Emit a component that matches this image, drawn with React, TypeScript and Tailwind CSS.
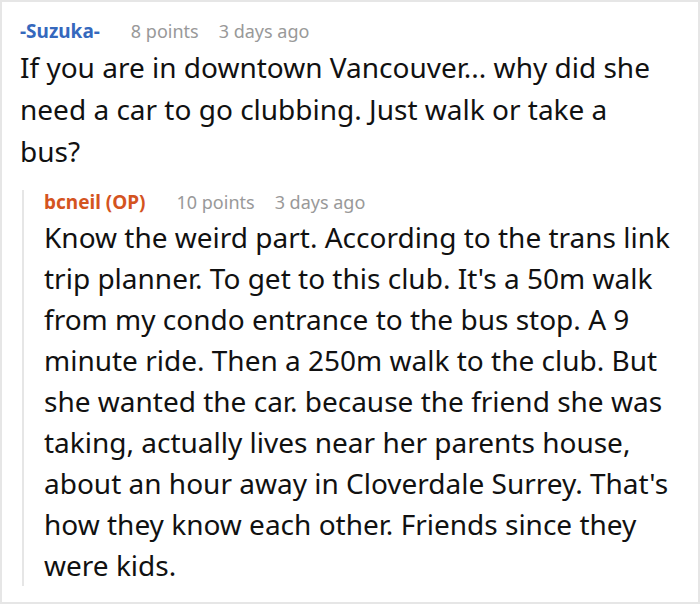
const font = { fontFamily: '"Noto Sans", "Open Sans", sans-serif' };

function Meta({ author, color, points, age }: { author: string; color: string; points: string; age: string }) {
  return (
    <div className="flex items-baseline gap-[31px] leading-[24px]">
      <span className={`font-bold text-[19px] ${color}`}>{author}</span>
      <div className="flex gap-[20px] text-[18px] text-[#999999]">
        <span>{points}</span>
        <span>{age}</span>
      </div>
    </div>
  );
}

export default function App() {
  return (
    <div style={font} className="w-[700px] h-[604px] overflow-hidden bg-white border-2 border-[#e6e6e6] text-[#111111]">
      <div className="pl-[18px] pr-[28px] pt-[17px]">
        <Meta author="-Suzuka-" color="text-[#3568bd]" points="8 points" age="3 days ago" />
        <p className="text-[28px] leading-[42px] mt-[3px]">
          If you are in downtown Vancouver... why did she need a car to go clubbing. Just walk or take a bus?
        </p>

        <div className="mt-[18px] ml-[2px] border-l-2 border-[#e6e6e6] pl-[20px]">
          <Meta author="bcneil (OP)" color="text-[#d4541f]" points="10 points" age="3 days ago" />
          <p className="text-[28px] leading-[41px] mt-[3px] -mb-[4px]">
            Know the weird part. According to the trans link trip planner. To get to this club. It's a 50m walk from my condo entrance to the bus stop. A 9 minute ride. Then a 250m walk to the club. But she wanted the car. because the friend she was taking, actually lives near her parents house, about an hour away in Cloverdale Surrey. That's how they know each other. Friends since they were kids.
          </p>
        </div>
      </div>
    </div>
  );
}
